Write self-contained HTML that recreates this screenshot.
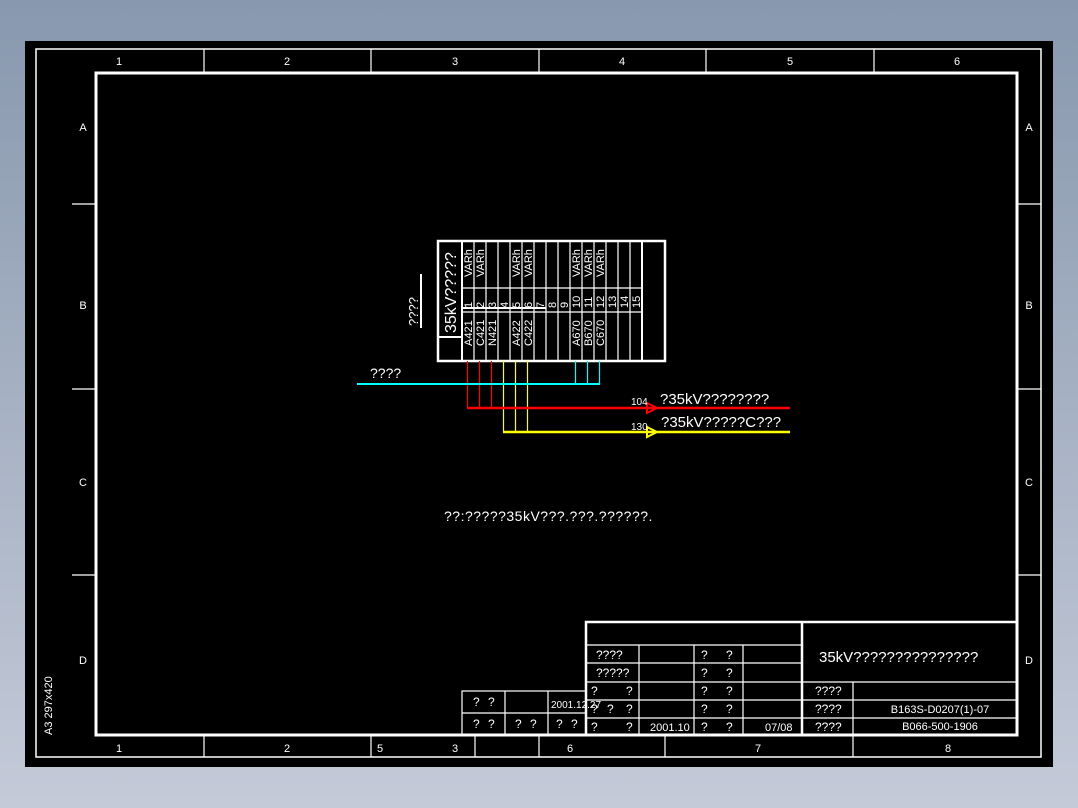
<!DOCTYPE html>
<html><head><meta charset="utf-8"><style>
html,body{margin:0;padding:0;width:1078px;height:808px;overflow:hidden;background:linear-gradient(#8898ae,#c4cad8);}
svg{position:absolute;left:0;top:0}
text{font-family:"Liberation Sans",sans-serif;fill:#fff}
</style></head><body>
<svg width="1078" height="808" viewBox="0 0 1078 808">
<rect x="25" y="41" width="1028" height="726" fill="#000"/>
<g stroke="#fff" fill="none">
<rect x="36" y="49" width="1005" height="708" stroke-width="1.5"/>
<rect x="96" y="73" width="921" height="662" stroke-width="3"/>
<path d="M204 49V73M371 49V73M539 49V73M706 49V73M874 49V73" stroke-width="1.2"/>
<path d="M204 735V757M371 735V757M475 735V757M539 735V757M665 735V757M853 735V757" stroke-width="1.2"/>
<path d="M72 204H96M72 389H96M72 575H96M1017 204H1041M1017 389H1041M1017 575H1041" stroke-width="1.2"/>
<rect x="438" y="241" width="227" height="120" stroke-width="2.5"/>
<path d="M462 241V361M642 241V361M438 337H462" stroke-width="2"/>
<path d="M474 241V361M486 241V361M498 241V361M510 241V361M522 241V361M534 241V361M546 241V361M558 241V361M570 241V361M582 241V361M594 241V361M606 241V361M618 241V361M630 241V361M462 288H642M462 312H642" stroke-width="1.2"/>
<path d="M462 308H546" stroke-width="2"/>
<path d="M421 274V328" stroke-width="2"/>
<rect x="586" y="622" width="431" height="113" stroke-width="2.5"/>
<path d="M802 622V735" stroke-width="2.5"/>
<path d="M586 645H802M586 663H802M586 682H1017M586 700H1017M586 718H1017M639 645V735M694 645V735M743 645V735M853 682V735" stroke-width="1.2"/>
<rect x="462" y="691" width="124" height="44" stroke-width="1.2"/>
<path d="M462 713H586M505 691V735M548 691V735" stroke-width="1.2"/>
</g>
<g fill="none" stroke-width="1.2">
<path d="M467.5 361V408M479.5 361V408M491.5 361V408" stroke="#f00"/>
<path d="M503.5 361V432M515.5 361V432M527.5 361V432" stroke="#ff0"/>
<path d="M575.5 361V384M587.5 361V384M599.5 361V384" stroke="#0ff"/>
<path d="M357 384H600" stroke="#0ff" stroke-width="2"/>
<path d="M467 408H790" stroke="#f00" stroke-width="2.5"/>
<path d="M503 432H790" stroke="#ff0" stroke-width="2.5"/>
</g>
<path d="M647 403L657 408L647 413Z" fill="none" stroke="#f00" stroke-width="2"/>
<path d="M647 427L657 432L647 437Z" fill="none" stroke="#ff0" stroke-width="2"/>
<g font-size="11" text-anchor="middle">
<text x="119" y="65">1</text><text x="287" y="65">2</text><text x="455" y="65">3</text><text x="622" y="65">4</text><text x="790" y="65">5</text><text x="957" y="65">6</text>
<text x="119" y="752">1</text><text x="287" y="752">2</text><text x="380" y="752">5</text><text x="455" y="752">3</text><text x="570" y="752">6</text><text x="758" y="752">7</text><text x="948" y="752">8</text>
<text x="83" y="131">A</text><text x="83" y="309">B</text><text x="83" y="486">C</text><text x="83" y="664">D</text>
<text x="1029" y="131">A</text><text x="1029" y="309">B</text><text x="1029" y="486">C</text><text x="1029" y="664">D</text>
</g>
<text transform="translate(52,735) rotate(-90)" font-size="11">A3  297x420</text>
<text transform="translate(418,326) rotate(-90)" font-size="13">????</text>
<text transform="translate(456,333) rotate(-90)" font-size="16">35kV?????</text>
<g font-size="11">
<text transform="translate(472,277) rotate(-90)">VARh</text>
<text transform="translate(484,277) rotate(-90)">VARh</text>
<text transform="translate(520,277) rotate(-90)">VARh</text>
<text transform="translate(532,277) rotate(-90)">VARh</text>
<text transform="translate(580,277) rotate(-90)">VARh</text>
<text transform="translate(592,277) rotate(-90)">VARh</text>
<text transform="translate(604,277) rotate(-90)">VARh</text>
<text transform="translate(472,308) rotate(-90)">1</text>
<text transform="translate(484,308) rotate(-90)">2</text>
<text transform="translate(496,308) rotate(-90)">3</text>
<text transform="translate(508,308) rotate(-90)">4</text>
<text transform="translate(520,308) rotate(-90)">5</text>
<text transform="translate(532,308) rotate(-90)">6</text>
<text transform="translate(544,308) rotate(-90)">7</text>
<text transform="translate(556,308) rotate(-90)">8</text>
<text transform="translate(568,308) rotate(-90)">9</text>
<text transform="translate(580,308) rotate(-90)">10</text>
<text transform="translate(592,308) rotate(-90)">11</text>
<text transform="translate(604,308) rotate(-90)">12</text>
<text transform="translate(616,308) rotate(-90)">13</text>
<text transform="translate(628,308) rotate(-90)">14</text>
<text transform="translate(640,308) rotate(-90)">15</text>
<text transform="translate(472,346) rotate(-90)">A421</text>
<text transform="translate(484,346) rotate(-90)">C421</text>
<text transform="translate(496,346) rotate(-90)">N421</text>
<text transform="translate(520,346) rotate(-90)">A422</text>
<text transform="translate(532,346) rotate(-90)">C422</text>
<text transform="translate(580,346) rotate(-90)">A670</text>
<text transform="translate(592,346) rotate(-90)">B670</text>
<text transform="translate(604,346) rotate(-90)">C670</text>
</g>
<text x="370" y="378" font-size="14">????</text>
<text x="631" y="405" font-size="10">104</text>
<text x="631" y="430" font-size="10">130</text>
<text x="660" y="404" font-size="15">?35kV????????</text>
<text x="661" y="427" font-size="15">?35kV?????C???</text>
<text x="444" y="521" font-size="14" letter-spacing="0.5">??:?????35kV???.???.??????.</text>
<g font-size="12">
<text x="596" y="659">????</text><text x="596" y="677">?????</text>
<text x="591" y="695">?</text><text x="626" y="695">?</text>
<text x="591" y="713">?</text><text x="607" y="713">?</text><text x="626" y="713">?</text>
<text x="591" y="731">?</text><text x="626" y="731">?</text>
<text x="701" y="659">?</text><text x="726" y="659">?</text>
<text x="701" y="677">?</text><text x="726" y="677">?</text>
<text x="701" y="695">?</text><text x="726" y="695">?</text>
<text x="701" y="713">?</text><text x="726" y="713">?</text>
<text x="701" y="731">?</text><text x="726" y="731">?</text>
<text x="650" y="731" font-size="11">2001.10</text>
<text x="765" y="731" font-size="11">07/08</text>
<text x="473" y="706">?</text><text x="488" y="706">?</text>
<text x="473" y="728">?</text><text x="488" y="728">?</text>
<text x="515" y="728">?</text><text x="530" y="728">?</text>
<text x="556" y="728">?</text><text x="571" y="728">?</text>
<text x="551" y="708" font-size="10">2001.12.27</text>
<text x="815" y="695">????</text><text x="815" y="713">????</text><text x="815" y="731">????</text>
<text x="940" y="713" font-size="11" text-anchor="middle">B163S-D0207(1)-07</text>
<text x="940" y="730" font-size="11" text-anchor="middle">B066-500-1906</text>
</g>
<text x="819" y="662" font-size="15">35kV???????????????</text>
</svg>
</body></html>
